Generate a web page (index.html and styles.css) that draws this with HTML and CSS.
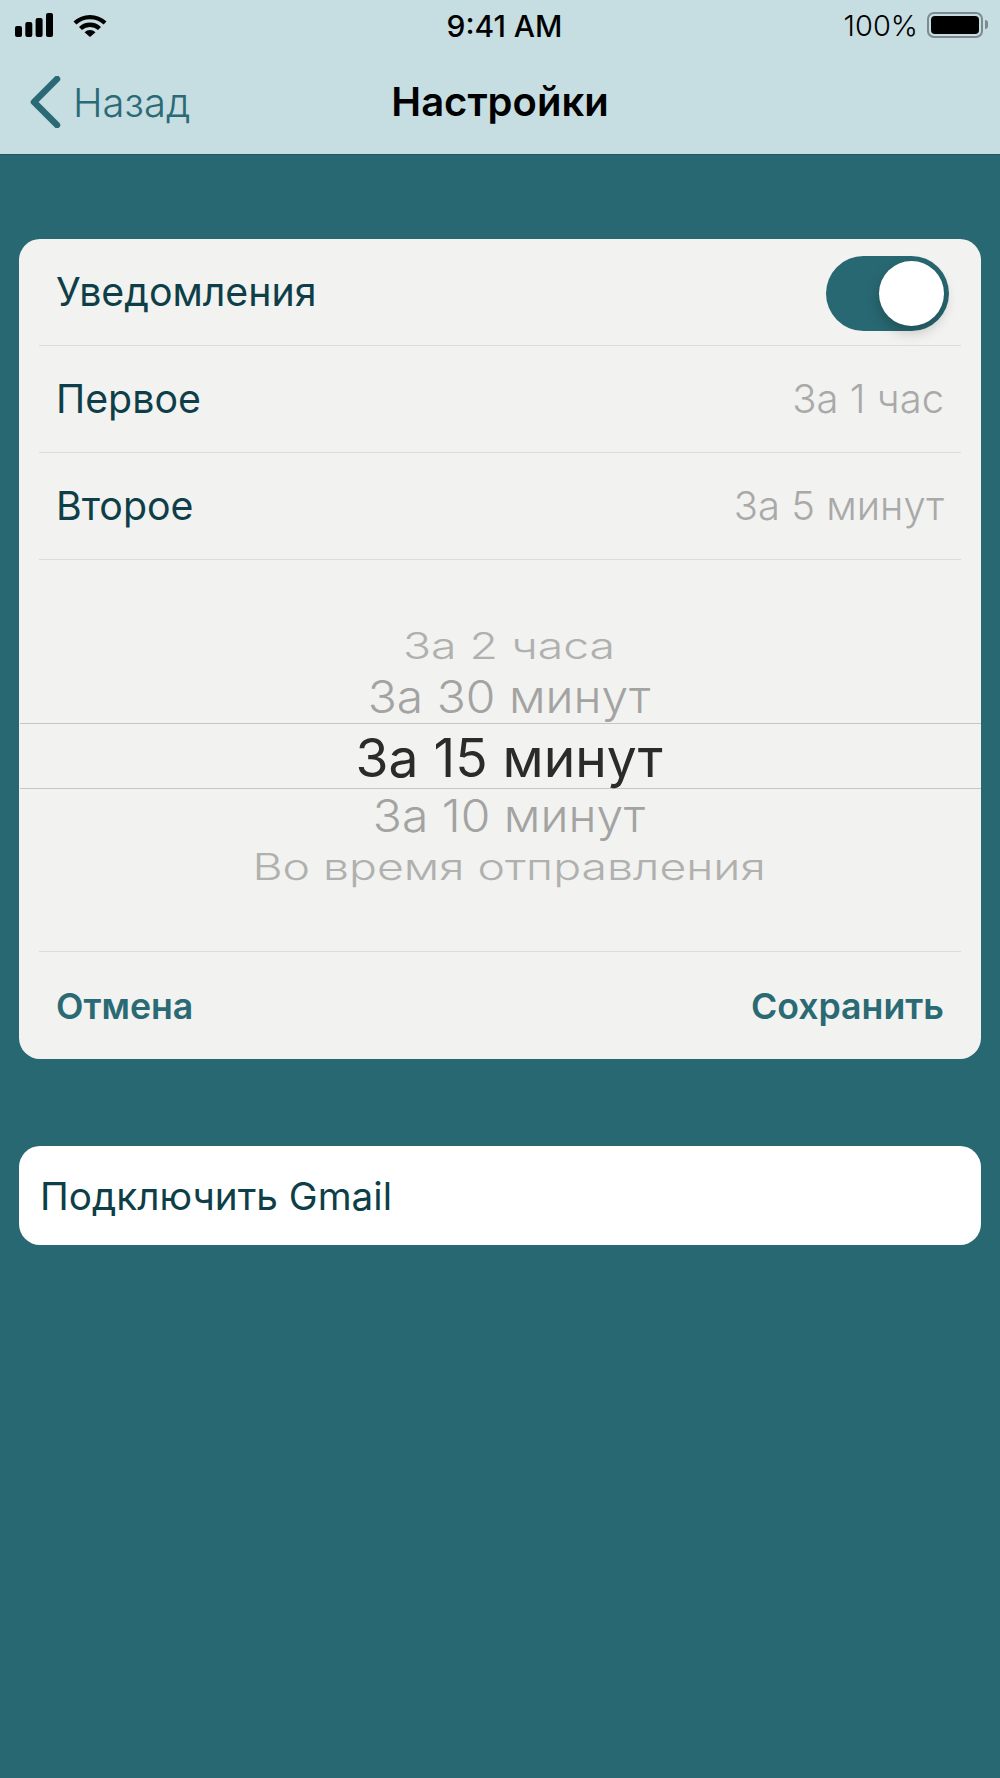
FILE: index.html
```html
<!DOCTYPE html>
<html>
<head>
  <title>Настройки</title>
  <meta charset="UTF-8">
  <meta name="viewport" content="width=device-width, initial-scale=1.0">
  <link rel="stylesheet" href="styles.css">
</head>
<body>
  <header class="topbar">
    <div class="status">
      <div class="status-left">
        <svg width="38" height="24" viewBox="0 0 38 24">
          <rect x="0" y="13" width="7" height="11" rx="2"></rect>
          <rect x="10.3" y="9" width="7" height="15" rx="2"></rect>
          <rect x="20.6" y="5" width="7" height="19" rx="2"></rect>
          <rect x="31" y="0" width="7" height="24" rx="2"></rect>
        </svg>
        <svg width="34" height="24" viewBox="0 0 34 24">
          <path d="M0.5 8.5 A24 24 0 0 1 33.5 8.5 L30.6 11.6 A20 20 0 0 0 3.4 11.6 Z"></path>
          <path d="M6 14 A16 16 0 0 1 28 14 L25 17 A12 12 0 0 0 9 17 Z"></path>
          <path d="M11.5 19.3 A8 8 0 0 1 22.5 19.3 L17 24 Z"></path>
        </svg>
      </div>
      <div class="clock">9:41 AM</div>
      <div class="status-right">
        <span>100%</span>
        <div class="battery"><div class="battery-fill"></div></div>
        <div class="battery-cap"></div>
      </div>
    </div>
    <nav class="navbar">
      <a class="back">
        <svg width="32" height="52" viewBox="0 0 32 52">
          <path d="M28 3 L5 26 L28 49" fill="none" stroke="#2a6a74" stroke-width="6.5" stroke-linecap="round" stroke-linejoin="round"></path>
        </svg>
        <span>Назад</span>
      </a>
      <h1>Настройки</h1>
    </nav>
  </header>

  <main class="content">
    <section class="card">
      <div class="row">
        <span class="row-title">Уведомления</span>
        <div class="switch"><div class="knob"></div></div>
      </div>
      <div class="row">
        <span class="row-title">Первое</span>
        <span class="row-value">За 1 час</span>
      </div>
      <div class="row">
        <span class="row-title">Второе</span>
        <span class="row-value">За 5 минут</span>
      </div>

      <div class="picker">
        <div class="pick pick-far pick-above">За 2 часа</div>
        <div class="pick pick-near pick-above">За 30 минут</div>
        <div class="pick pick-current">За 15 минут</div>
        <div class="pick pick-near pick-below">За 10 минут</div>
        <div class="pick pick-far pick-below">Во время отправления</div>
      </div>

      <div class="actions">
        <a>Отмена</a>
        <a>Сохранить</a>
      </div>
    </section>

    <section class="gmail">Подключить Gmail</section>
  </main>
</body>
</html>
```

FILE: styles.css
```css
* {
  box-sizing: border-box;
}

body {
  font-family: Inter, 'Liberation Sans', sans-serif;
  background: #286872;
  margin: 0;
  width: 1000px;
  height: 1778px;
  overflow: hidden;
}

.topbar {
  background: #c6dde2;
  height: 155px;
  border-bottom: 1px solid #1f555e;
}

.status {
  height: 49px;
  display: flex;
  align-items: center;
  justify-content: space-between;
  padding: 0 12px 0 15px;
  position: relative;
  color: #000;
  font-size: 29px;
}

.status svg {
  fill: #000;
  display: block;
}

.status-left {
  display: flex;
  align-items: center;
  gap: 20px;
}

.clock {
  position: absolute;
  left: 9px;
  right: 0;
  top: 8px;
  text-align: center;
  font-size: 30px;
  font-weight: 500;
}

.status-right {
  display: flex;
  align-items: center;
}

.status-right span {
  margin-right: 8px;
  margin-top: 2px;
  font-weight: 300;
}

.battery {
  width: 56px;
  height: 26px;
  border: 2px solid #7d8a8e;
  border-radius: 7px;
  padding: 2px;
  margin-left: 1px;
}

.battery-fill {
  background: #000;
  height: 100%;
  border-radius: 4px;
}

.battery-cap {
  width: 3px;
  height: 9px;
  background: #7d8a8e;
  border-radius: 0 3px 3px 0;
  margin-left: 2px;
}

.navbar {
  height: 105px;
  display: flex;
  align-items: center;
  justify-content: center;
  position: relative;
}

.navbar h1 {
  margin: 0;
  font-size: 40px;
  font-weight: 600;
  color: #000;
}

.back {
  position: absolute;
  left: 29px;
  top: 27px;
  display: flex;
  align-items: center;
  gap: 12px;
  color: #2a6a74;
  font-size: 40px;
  font-weight: 300;
}

.back svg {
  display: block;
}

.content {
  padding: 84px 19px 0 19px;
}

.card {
  background: #f2f2f0;
  border-radius: 21px;
  height: 820px;
  display: flex;
  flex-direction: column;
}

.row {
  height: 107px;
  margin: 0 20px;
  padding: 0 17px;
  border-bottom: 1px solid #dcdcda;
  display: flex;
  align-items: center;
  justify-content: space-between;
  flex-shrink: 0;
}

.row-title {
  font-size: 39.3px;
  font-weight: 400;
  color: #0e3f48;
  margin-top: -1px;
}

.row-value {
  font-size: 40px;
  font-weight: 300;
  color: #a9a9a9;
  margin-top: -1px;
}

.switch {
  width: 123px;
  height: 75px;
  background: #286872;
  border-radius: 38px;
  position: relative;
  margin-right: -5px;
  margin-top: 3px;
}

.knob {
  position: absolute;
  right: 5px;
  top: 5px;
  width: 65px;
  height: 65px;
  background: #fff;
  border-radius: 50%;
  box-shadow: 0 6px 14px rgba(0, 0, 0, 0.22);
}

.picker {
  height: 392px;
  display: flex;
  flex-direction: column;
  align-items: center;
  justify-content: center;
  border-bottom: 1px solid #dcdcda;
  margin: 0 20px;
  flex-shrink: 0;
}

.pick {
  white-space: nowrap;
  font-weight: 300;
}

.pick-far {
  font-size: 46.4px;
  color: #b0b0af;
  height: 46px;
  margin-left: 18px;
  transform: scaleY(0.78);
}

.pick-near {
  font-size: 48px;
  color: #a3a3a2;
  height: 56px;
  margin-left: 18px;
  transform: scaleY(0.93);
}

.pick-far.pick-above {
  line-height: 50px;
}

.pick-far.pick-below {
  line-height: 44px;
}

.pick-near.pick-above {
  line-height: 60px;
}

.pick-near.pick-below {
  line-height: 54px;
}

.pick-current {
  font-size: 53.4px;
  color: #2b2b2b;
  font-weight: 400;
  height: 66px;
  line-height: 68px;
  width: 961px;
  padding-left: 18px;
  text-align: center;
  border-top: 1px solid #c6c6c4;
  border-bottom: 1px solid #c6c6c4;
}

.actions {
  flex: 1;
  display: flex;
  align-items: center;
  justify-content: space-between;
  padding: 0 37px;
  font-size: 35.7px;
  font-weight: 600;
  color: #2a6a74;
}

.gmail {
  background: #fff;
  border-radius: 21px;
  height: 99px;
  margin-top: 87px;
  padding-left: 21px;
  display: flex;
  align-items: center;
  font-size: 38.7px;
  color: #0e3f48;
}
```
